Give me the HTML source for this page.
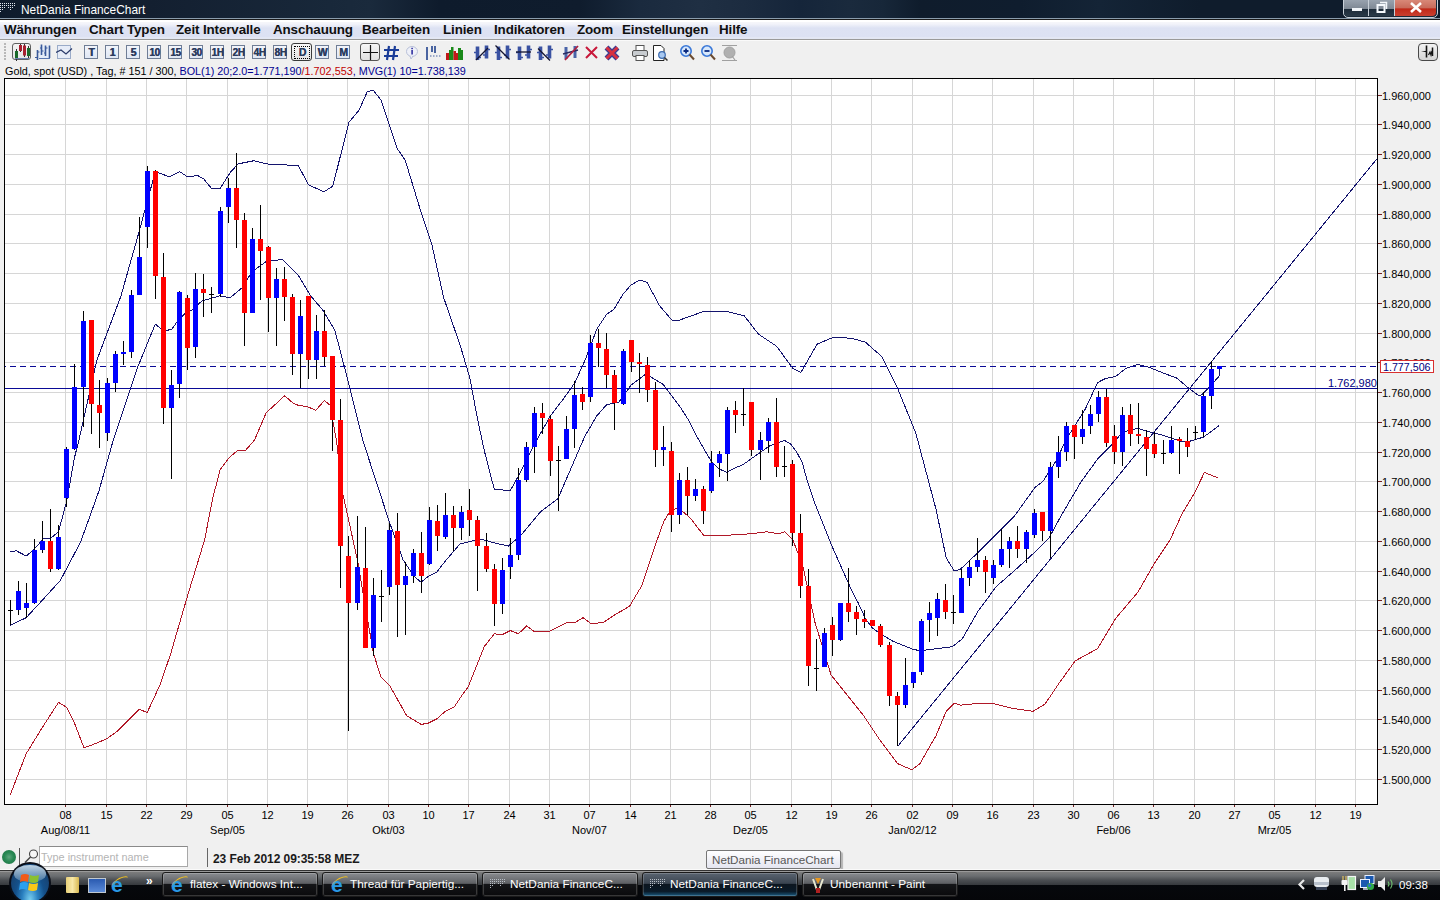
<!DOCTYPE html>
<html><head><meta charset="utf-8">
<style>
html,body{margin:0;padding:0;}
body{width:1440px;height:900px;overflow:hidden;position:relative;background:#f0f0f0;font-family:'Liberation Sans', sans-serif;}
div{position:absolute;white-space:nowrap;}
.xl{width:41px;text-align:center;font-size:11px;line-height:13px;color:#000;}
.yl{left:1382px;font-size:11px;line-height:13px;color:#000;}
#title{left:0;top:0;width:1440px;height:18px;background:linear-gradient(90deg,#0f1e30 0%,#1a2d45 40%,#10223a 70%,#0d1a2c 100%);}
#menu{left:0;top:18px;width:1440px;height:23px;background:linear-gradient(#8a9cac 0,#8a9cac 1px,#1a1a1a 1px,#1a1a1a 2px,#fff 2px,#fff 4px,#f6f6fa 4px,#f2f3fa 6px,#dde2f3 10px,#dce1f3 19px,#e3e7f4 19px,#e3e7f4 21px,#9a9a9a 21px,#9a9a9a 22px,#fafafa 22px);}
.mi{top:22px;font-size:13.4px;font-weight:bold;color:#101010;line-height:16px;letter-spacing:-0.12px;}
#info{left:5px;top:64px;font-size:10.8px;line-height:14px;color:#000;}
</style></head><body>
<div style="left:0;top:0;width:1440px;height:18px;background:linear-gradient(90deg,#0f1c2c 0px,#131f30 150px,#18283a 330px,#1a2a3c 370px,#0e1b2c 440px,#0f1c2d 580px,#1a2a3e 640px,#1f2f43 700px,#1c2c40 744px,#15253a 800px,#1a2a3d 850px,#172739 883px,#0f1c2c 920px,#0f1d2e 1020px,#142436 1100px,#0f1c2c 1200px,#0f1c2c 1440px)"></div>
<svg style="position:absolute;left:0;top:0" width="16" height="14" shape-rendering="crispEdges"><g fill="#dfe6ee"><rect x="0" y="3" width="1" height="1"/><rect x="2" y="3" width="1" height="1"/><rect x="4" y="3" width="1" height="1"/><rect x="6" y="3" width="1" height="1"/><rect x="8" y="3" width="1" height="1"/><rect x="10" y="3" width="1" height="1"/><rect x="12" y="3" width="1" height="1"/><rect x="14" y="3" width="1" height="1"/><rect x="0" y="5" width="1" height="1"/><rect x="2" y="5" width="1" height="1"/><rect x="4" y="5" width="1" height="1"/><rect x="6" y="5" width="1" height="1"/><rect x="8" y="5" width="1" height="1"/><rect x="10" y="5" width="1" height="1"/><rect x="12" y="5" width="1" height="1"/><rect x="14" y="5" width="1" height="1"/><rect x="0" y="7" width="1" height="1"/><rect x="2" y="7" width="1" height="1"/><rect x="4" y="7" width="1" height="1"/><rect x="8" y="7" width="1" height="1"/><rect x="10" y="7" width="1" height="1"/><rect x="12" y="7" width="1" height="1"/><rect x="0" y="9" width="1" height="1"/><rect x="2" y="9" width="1" height="1"/><rect x="10" y="9" width="1" height="1"/><rect x="0" y="11" width="1" height="1"/></g></svg>
<div style="left:21px;top:2px;font:11.9px/17px 'Liberation Sans', sans-serif;color:#fff">NetDania FinanceChart</div>
<div style="left:1343px;top:-3px;width:93px;height:19px;border:1px solid #c8d0d8;border-radius:0 0 5px 5px;background:#1a2a3a;overflow:hidden"></div>
<div style="left:1344px;top:0px;width:24px;height:16px;background:linear-gradient(#98a2ae 0,#7e8894 55%,#1c2a38 55%,#2a3a48 100%);border-radius:0 0 0 4px"></div>
<div style="left:1369px;top:0px;width:25px;height:16px;background:linear-gradient(#98a2ae 0,#7e8894 55%,#1c2a38 55%,#2a3a48 100%)"></div>
<div style="left:1395px;top:0px;width:41px;height:16px;background:linear-gradient(#d88878 0,#c86a5a 50%,#c02818 55%,#c84030 100%);border-radius:0 0 4px 0"></div>
<div style="left:1368px;top:0;width:1px;height:16px;background:#c8d0d8"></div>
<div style="left:1394px;top:0;width:1px;height:16px;background:#c8d0d8"></div>
<div style="left:1352px;top:8px;width:10px;height:3px;background:#f0f4f8"></div>
<svg style="position:absolute;left:1376px;top:1px" width="12" height="12">
<path d="M4 1.5H10.5V8" stroke="#f0f4f8" stroke-width="1.5" fill="none"/><rect x="1.5" y="4" width="7" height="7" fill="none" stroke="#f4f8fc" stroke-width="2"/></svg>
<svg style="position:absolute;left:1409px;top:2px" width="14" height="11">
<path d="M2 1L12 10M12 1L2 10" stroke="#fff" stroke-width="2.6"/></svg>
<div id="menu"></div>
<div class="mi" style="left:4px">Währungen</div>
<div class="mi" style="left:89px">Chart Typen</div>
<div class="mi" style="left:176px">Zeit Intervalle</div>
<div class="mi" style="left:273px">Anschauung</div>
<div class="mi" style="left:362px">Bearbeiten</div>
<div class="mi" style="left:443px">Linien</div>
<div class="mi" style="left:494px">Indikatoren</div>
<div class="mi" style="left:577px">Zoom</div>
<div class="mi" style="left:622px">Einstellungen</div>
<div class="mi" style="left:719px">Hilfe</div>
<div id="info">Gold, spot (USD) , Tag, # 151 / 300, <span style="color:#000090">BOL(1) 20;2.0=1.771,190</span><span style="color:#c00000">/1.702,553</span><span style="color:#000090">, MVG(1) 10=1.738,139</span></div>
<div style="left:4px;top:43px;width:2px;height:2px;background:#b8b8b8"></div>
<div style="left:4px;top:46px;width:2px;height:2px;background:#b8b8b8"></div>
<div style="left:4px;top:49px;width:2px;height:2px;background:#b8b8b8"></div>
<div style="left:4px;top:52px;width:2px;height:2px;background:#b8b8b8"></div>
<div style="left:4px;top:55px;width:2px;height:2px;background:#b8b8b8"></div>
<div style="left:4px;top:58px;width:2px;height:2px;background:#b8b8b8"></div>
<div style="left:12px;top:43px;width:17px;height:15px;border:1.5px solid #606060;border-radius:3px;background:linear-gradient(#f4f4f4,#e6e6e6)"></div>
<svg style="position:absolute;left:12px;top:43px" width="22" height="20">
<path d="M4.5 6V18M8.5 1V9M12.5 1V14M16.5 3V16" stroke="#333" stroke-width="1"/>
<rect x="3" y="8" width="3" height="8" fill="#1a6a2a"/><rect x="7" y="2" width="3" height="6" fill="#a82030"/>
<rect x="11" y="2.5" width="3" height="10" fill="#a82030"/><rect x="15" y="5" width="3" height="8" fill="#1a6a2a"/>
<path d="M3 15.5H17" stroke="#6a80b0" stroke-width="1"/></svg>
<svg style="position:absolute;left:35px;top:44px" width="17" height="17">
<rect x="4" y="1.5" width="11" height="13" fill="#e4ecf8"/>
<path d="M4 14.5H15M14.5 2V15" stroke="#5a78b0" stroke-width="1"/>
<path d="M2.5 6V16M6.5 0.5V11M10.5 1.5V12M14.5 1.5V14" stroke="#3a5a9a" stroke-width="1.6"/>
<path d="M0 13.5H2.5M2.5 8H4.5M5 4H6.5M6.5 7H8.5M9 9H10.5M10.5 4H12.5" stroke="#3a5a9a" stroke-width="1.2"/></svg>
<svg style="position:absolute;left:56px;top:44px" width="17" height="16">
<rect x="1.5" y="1.5" width="13" height="13" fill="#e6ecf8" stroke="#9aabc8" stroke-width="1"/>
<path d="M0 8.5L5 6L10 10L16 4.5" stroke="#2a3a6a" stroke-width="1.2" fill="none"/></svg>
<div style="left:84px;top:45px;width:12px;height:12px;border:1px solid #6f7d95;background:linear-gradient(#f2f5fb,#dfe7f4)"></div><div style="left:84px;top:46px;width:15px;height:13px;font:bold 10.5px/13px 'Liberation Sans', sans-serif;color:#2c3c5e;text-align:center;letter-spacing:0;text-shadow:0.35px 0 0 #2c3c5e">T</div>
<div style="left:105px;top:45px;width:12px;height:12px;border:1px solid #6f7d95;background:linear-gradient(#f2f5fb,#dfe7f4)"></div><div style="left:105px;top:46px;width:15px;height:13px;font:bold 10.5px/13px 'Liberation Sans', sans-serif;color:#2c3c5e;text-align:center;letter-spacing:0;text-shadow:0.35px 0 0 #2c3c5e">1</div>
<div style="left:126px;top:45px;width:12px;height:12px;border:1px solid #6f7d95;background:linear-gradient(#f2f5fb,#dfe7f4)"></div><div style="left:126px;top:46px;width:15px;height:13px;font:bold 10.5px/13px 'Liberation Sans', sans-serif;color:#2c3c5e;text-align:center;letter-spacing:0;text-shadow:0.35px 0 0 #2c3c5e">5</div>
<div style="left:147px;top:45px;width:12px;height:12px;border:1px solid #6f7d95;background:linear-gradient(#f2f5fb,#dfe7f4)"></div><div style="left:147px;top:46px;width:15px;height:13px;font:bold 10px/13px 'Liberation Sans', sans-serif;color:#2c3c5e;text-align:center;letter-spacing:-0.4px;text-shadow:0.35px 0 0 #2c3c5e">10</div>
<div style="left:168px;top:45px;width:12px;height:12px;border:1px solid #6f7d95;background:linear-gradient(#f2f5fb,#dfe7f4)"></div><div style="left:168px;top:46px;width:15px;height:13px;font:bold 10px/13px 'Liberation Sans', sans-serif;color:#2c3c5e;text-align:center;letter-spacing:-0.4px;text-shadow:0.35px 0 0 #2c3c5e">15</div>
<div style="left:189px;top:45px;width:12px;height:12px;border:1px solid #6f7d95;background:linear-gradient(#f2f5fb,#dfe7f4)"></div><div style="left:189px;top:46px;width:15px;height:13px;font:bold 10px/13px 'Liberation Sans', sans-serif;color:#2c3c5e;text-align:center;letter-spacing:-0.4px;text-shadow:0.35px 0 0 #2c3c5e">30</div>
<div style="left:210px;top:45px;width:12px;height:12px;border:1px solid #6f7d95;background:linear-gradient(#f2f5fb,#dfe7f4)"></div><div style="left:210px;top:46px;width:15px;height:13px;font:bold 10px/13px 'Liberation Sans', sans-serif;color:#2c3c5e;text-align:center;letter-spacing:-0.4px;text-shadow:0.35px 0 0 #2c3c5e">1H</div>
<div style="left:231px;top:45px;width:12px;height:12px;border:1px solid #6f7d95;background:linear-gradient(#f2f5fb,#dfe7f4)"></div><div style="left:231px;top:46px;width:15px;height:13px;font:bold 10px/13px 'Liberation Sans', sans-serif;color:#2c3c5e;text-align:center;letter-spacing:-0.4px;text-shadow:0.35px 0 0 #2c3c5e">2H</div>
<div style="left:252px;top:45px;width:12px;height:12px;border:1px solid #6f7d95;background:linear-gradient(#f2f5fb,#dfe7f4)"></div><div style="left:252px;top:46px;width:15px;height:13px;font:bold 10px/13px 'Liberation Sans', sans-serif;color:#2c3c5e;text-align:center;letter-spacing:-0.4px;text-shadow:0.35px 0 0 #2c3c5e">4H</div>
<div style="left:273px;top:45px;width:12px;height:12px;border:1px solid #6f7d95;background:linear-gradient(#f2f5fb,#dfe7f4)"></div><div style="left:273px;top:46px;width:15px;height:13px;font:bold 10px/13px 'Liberation Sans', sans-serif;color:#2c3c5e;text-align:center;letter-spacing:-0.4px;text-shadow:0.35px 0 0 #2c3c5e">8H</div>
<div style="left:291px;top:43px;width:19px;height:16px;border:1.5px solid #3a3a3a;border-radius:3px;background:linear-gradient(#f8f8f8,#e4e4e4)"></div><div style="left:294px;top:46px;width:14px;height:11px;border:1px dotted #000;"></div><div style="left:295px;top:46px;width:15px;height:13px;font:bold 10.5px/13px 'Liberation Sans', sans-serif;color:#2c3c5e;text-align:center;letter-spacing:0;text-shadow:0.35px 0 0 #2c3c5e">D</div>
<div style="left:315px;top:45px;width:12px;height:12px;border:1px solid #6f7d95;background:linear-gradient(#f2f5fb,#dfe7f4)"></div><div style="left:315px;top:46px;width:15px;height:13px;font:bold 10.5px/13px 'Liberation Sans', sans-serif;color:#2c3c5e;text-align:center;letter-spacing:0;text-shadow:0.35px 0 0 #2c3c5e">W</div>
<div style="left:336px;top:45px;width:12px;height:12px;border:1px solid #6f7d95;background:linear-gradient(#f2f5fb,#dfe7f4)"></div><div style="left:336px;top:46px;width:15px;height:13px;font:bold 10.5px/13px 'Liberation Sans', sans-serif;color:#2c3c5e;text-align:center;letter-spacing:0;text-shadow:0.35px 0 0 #2c3c5e">M</div>
<div style="left:360px;top:43px;width:18px;height:16px;border:1.5px solid #555;border-radius:3px;background:linear-gradient(#f6f6f6,#e0e0e0)"></div>
<svg style="position:absolute;left:360px;top:43px" width="22" height="20">
<path d="M3 9.5H18M10.5 2V17" stroke="#111" stroke-width="1.2"/></svg>
<svg style="position:absolute;left:383px;top:44px" width="18" height="18">
<path d="M6 2L4 16M12 2L10 16M1 6H16M1 12H15" stroke="#1a3c98" stroke-width="2.2"/></svg>
<svg style="position:absolute;left:405px;top:45px" width="15" height="16">
<ellipse cx="7" cy="6.5" rx="5.5" ry="5" fill="#eef0f8" stroke="#b8c0d8" stroke-width="1"/><path d="M5 11L6 14L8 11" fill="#eef0f8" stroke="#b8c0d8"/>
<rect x="6.3" y="5" width="1.6" height="4.5" fill="#3030a0"/><rect x="6.3" y="2.8" width="1.6" height="1.4" fill="#3030a0"/></svg>
<svg style="position:absolute;left:424px;top:44px" width="18" height="18">
<path d="M3 3V16M8 2V8M11 2V9" stroke="#4a64a0" stroke-width="2"/><path d="M7 5H13M6 12H17" stroke="#4a64a0" stroke-width="1.2" stroke-dasharray="1.5 1.5"/></svg>
<svg style="position:absolute;left:445px;top:44px" width="19" height="18">
<rect x="1" y="9" width="3" height="7" fill="#c01818"/><rect x="4" y="6" width="2" height="10" fill="#1a8a1a"/><rect x="6" y="3" width="2.5" height="13" fill="#1a8a1a"/>
<rect x="8.5" y="7" width="2.5" height="9" fill="#c01818"/><rect x="11" y="9" width="2" height="7" fill="#c01818"/><rect x="13" y="4" width="3" height="12" fill="#1a8a1a"/><rect x="16" y="6" width="2" height="10" fill="#1a8a1a"/></svg>
<svg style="position:absolute;left:473px;top:44px" width="18" height="18">
<path d="M4.5 2.5V16M13.5 1.5V14.5" stroke="#3a52a2" stroke-width="3.6"/><path d="M1 8.5H3M6 13.5H8M15 5.5H17M10 11H12" stroke="#3a52a2" stroke-width="1.6"/><path d="M3 16L15 4" stroke="#141430" stroke-width="1.3"/></svg>
<svg style="position:absolute;left:494px;top:44px" width="18" height="18">
<path d="M4.5 2.5V16M13.5 1.5V14.5" stroke="#3a52a2" stroke-width="3.6"/><path d="M1 8.5H3M6 13.5H8M15 5.5H17M10 11H12" stroke="#3a52a2" stroke-width="1.6"/><path d="M1.5 1.5L15.5 15.5" stroke="#141430" stroke-width="1.3"/></svg>
<svg style="position:absolute;left:515px;top:44px" width="18" height="18">
<path d="M4.5 2.5V16M13.5 1.5V14.5" stroke="#3a52a2" stroke-width="3.6"/><path d="M1 8.5H3M6 13.5H8M15 5.5H17M10 11H12" stroke="#3a52a2" stroke-width="1.6"/><path d="M1 8H16" stroke="#141430" stroke-width="1.3"/></svg>
<svg style="position:absolute;left:536px;top:44px" width="18" height="18">
<path d="M4.5 2.5V16M13.5 1.5V14.5" stroke="#3a52a2" stroke-width="3.6"/><path d="M1 8.5H3M6 13.5H8M15 5.5H17M10 11H12" stroke="#3a52a2" stroke-width="1.6"/><path d="M2 4.5L14 16.5" stroke="#141430" stroke-width="1.3"/></svg>
<svg style="position:absolute;left:562px;top:44px" width="19" height="18">
<path d="M4 3V15M13 2V14" stroke="#4a64a8" stroke-width="3"/><path d="M1 10L16 6" stroke="#2a2a60" stroke-width="1.4"/><path d="M3 16L16 2" stroke="#b02040" stroke-width="1.8"/></svg>
<svg style="position:absolute;left:583px;top:44px" width="18" height="18">
<path d="M3 3L14 14M14 3L3 14" stroke="#c8183a" stroke-width="2"/></svg>
<svg style="position:absolute;left:603px;top:44px" width="19" height="18">
<path d="M3.5 3.5L14.5 14.5M14.5 3.5L3.5 14.5" stroke="#3a3a90" stroke-width="5.5"/><path d="M3.5 3.5L14.5 14.5M14.5 3.5L3.5 14.5" stroke="#d83040" stroke-width="3"/></svg>
<svg style="position:absolute;left:631px;top:44px" width="19" height="18">
<rect x="5" y="1.5" width="8" height="5" fill="#fff" stroke="#555"/><rect x="1.5" y="6.5" width="15" height="6" rx="1.5" fill="#c8ccd0" stroke="#555"/>
<rect x="5" y="11.5" width="8" height="5" fill="#fff" stroke="#555"/></svg>
<svg style="position:absolute;left:652px;top:44px" width="18" height="18">
<path d="M1.5 1.5H9L12 4.5V16.5H1.5Z" fill="#fff" stroke="#222"/><circle cx="10" cy="11" r="3.3" fill="#a8c8f0" stroke="#3a6ab0" stroke-width="1.2"/><path d="M12.5 13.5L15.5 16.5" stroke="#333" stroke-width="1.5"/></svg>
<svg style="position:absolute;left:679px;top:44px" width="18" height="18">
<circle cx="7" cy="7" r="5.2" fill="#d8e8fb" stroke="#3a78d8" stroke-width="1.6"/><path d="M4.5 7H9.5M7 4.5V9.5" stroke="#0a2a80" stroke-width="1.8"/><path d="M10.5 10.5L15 15.5" stroke="#6a4a30" stroke-width="2"/></svg>
<svg style="position:absolute;left:700px;top:44px" width="18" height="18">
<circle cx="7" cy="7" r="5.2" fill="#d8e8fb" stroke="#3a78d8" stroke-width="1.6"/><path d="M4.5 7H9.5" stroke="#0a2a80" stroke-width="1.8"/><path d="M10.5 10.5L15 15.5" stroke="#6a4a30" stroke-width="2"/></svg>
<svg style="position:absolute;left:721px;top:44px" width="18" height="18">
<circle cx="8.5" cy="8.5" r="5.5" fill="#b0b0b0" stroke="#a0a0a0"/><path d="M1 1.5H16M1 16.5H16M11 12L14 16" stroke="#a0a0a0" stroke-width="1.2"/></svg>
<div style="left:1418px;top:43px;width:18px;height:16px;border:1.5px solid #484848;border-radius:4px;background:linear-gradient(#f2f2f2,#d4d4d4)"></div>
<svg style="position:absolute;left:1418px;top:43px" width="21" height="19">
<path d="M3 8.5L9 7.8V9.2Z" fill="#111"/><path d="M8.5 2.5V14.5" stroke="#111" stroke-width="1.6"/><path d="M10.5 12L12 9L13 12L14 8" stroke="#111" stroke-width="1.2" fill="none"/><path d="M14.5 4.5V13" stroke="#111" stroke-width="1.5"/></svg>
<svg width="1440" height="900" style="position:absolute;left:0;top:0">
<rect x="5" y="79" width="1372" height="725" fill="#ffffff"/>
<path d="M65.5 79V804 M106.5 79V804 M146.5 79V804 M186.5 79V804 M227.5 79V804 M267.5 79V804 M307.5 79V804 M347.5 79V804 M388.5 79V804 M428.5 79V804 M468.5 79V804 M509.5 79V804 M549.5 79V804 M589.5 79V804 M630.5 79V804 M670.5 79V804 M710.5 79V804 M750.5 79V804 M791.5 79V804 M831.5 79V804 M871.5 79V804 M912.5 79V804 M952.5 79V804 M992.5 79V804 M1033.5 79V804 M1073.5 79V804 M1113.5 79V804 M1153.5 79V804 M1194.5 79V804 M1234.5 79V804 M1274.5 79V804 M1315.5 79V804 M1355.5 79V804 M5 95.5H1377 M5 124.5H1377 M5 154.5H1377 M5 184.5H1377 M5 214.5H1377 M5 243.5H1377 M5 273.5H1377 M5 303.5H1377 M5 333.5H1377 M5 362.5H1377 M5 392.5H1377 M5 422.5H1377 M5 452.5H1377 M5 481.5H1377 M5 511.5H1377 M5 541.5H1377 M5 571.5H1377 M5 600.5H1377 M5 630.5H1377 M5 660.5H1377 M5 690.5H1377 M5 719.5H1377 M5 749.5H1377 M5 779.5H1377" stroke="#d6d6d6" stroke-width="1" fill="none" shape-rendering="crispEdges"/>
<path d="M65.5 805V807 M106.5 805V807 M146.5 805V807 M186.5 805V807 M227.5 805V807 M267.5 805V807 M307.5 805V807 M347.5 805V807 M388.5 805V807 M428.5 805V807 M468.5 805V807 M509.5 805V807 M549.5 805V807 M589.5 805V807 M630.5 805V807 M670.5 805V807 M710.5 805V807 M750.5 805V807 M791.5 805V807 M831.5 805V807 M871.5 805V807 M912.5 805V807 M952.5 805V807 M992.5 805V807 M1033.5 805V807 M1073.5 805V807 M1113.5 805V807 M1153.5 805V807 M1194.5 805V807 M1234.5 805V807 M1274.5 805V807 M1315.5 805V807 M1355.5 805V807 M1378 95.5H1382 M1378 124.5H1382 M1378 154.5H1382 M1378 184.5H1382 M1378 214.5H1382 M1378 243.5H1382 M1378 273.5H1382 M1378 303.5H1382 M1378 333.5H1382 M1378 362.5H1382 M1378 392.5H1382 M1378 422.5H1382 M1378 452.5H1382 M1378 481.5H1382 M1378 511.5H1382 M1378 541.5H1382 M1378 571.5H1382 M1378 600.5H1382 M1378 630.5H1382 M1378 660.5H1382 M1378 690.5H1382 M1378 719.5H1382 M1378 749.5H1382 M1378 779.5H1382" stroke="#702020" stroke-width="1" fill="none" shape-rendering="crispEdges"/>
<path d="M10.1 552.0 L16.1 550.7 L26.2 556.0 L34.3 549.1 L43.6 538.6 L50.4 538.6 L58.5 531.8 L66.6 501.5 L74.6 457.1 L78.7 441.0 L96.8 360.4 L121.0 295.8 L139.2 231.3 L155.3 171.6 L169.4 176.8 L179.5 171.6 L187.6 176.8 L197.7 175.6 L203.7 178.8 L211.8 188.9 L219.8 188.9 L230.0 172.8 L238.0 163.9 L254.1 160.7 L266.2 163.9 L282.4 164.7 L298.5 165.9 L308.6 184.9 L323.9 191.8 L332.8 186.1 L348.9 122.4 L359.0 110.3 L367.1 92.1 L373.1 90.1 L381.2 100.2 L397.3 148.6 L405.4 160.7 L419.5 207.1 L431.6 243.4 L443.7 297.8 L460.0 344.8 L469.8 377.8 L477.1 416.9 L484.4 451.1 L494.2 489.0 L510.1 490.8 L518.7 475.6 L533.3 446.3 L550.5 415.7 L562.7 399.8 L574.9 382.7 L585.9 358.2 L596.9 328.9 L606.7 314.2 L614.0 309.3 L622.6 294.7 L631.1 284.9 L639.7 280.0 L647.0 282.4 L659.7 305.9 L671.8 320.0 L679.8 320.0 L702.0 312.0 L726.2 311.2 L744.4 316.0 L758.5 334.2 L776.7 346.3 L792.8 368.4 L800.9 372.5 L817.0 344.2 L833.1 337.4 L851.3 338.2 L865.4 342.2 L881.5 356.3 L897.7 388.6 L915.8 433.0 L920.0 449.0 L936.1 509.6 L946.2 558.0 L954.3 570.9 L960.3 569.3 L976.5 554.0 L992.6 537.8 L1014.8 515.6 L1035.0 487.4 L1043.0 481.3 L1057.2 459.2 L1065.2 441.0 L1085.4 408.8 L1097.5 382.6 L1105.6 378.5 L1115.6 376.5 L1125.7 368.4 L1137.8 364.4 L1149.9 367.6 L1162.0 372.5 L1176.7 378.1 L1189.1 388.5 L1199.2 396.0 L1203.1 393.7 L1214.0 382.0 L1219.4 375.8 L1219.4 368.0" stroke="#14146e" stroke-width="1" fill="none" shape-rendering="crispEdges"/>
<path d="M10.1 625.3 L26.2 617.7 L40.3 602.4 L60.5 580.2 L80.7 541.8 L98.8 491.4 L113.0 441.0 L137.2 368.4 L155.3 324.0 L163.0 330.6 L171.4 329.7 L177.0 322.0 L184.7 313.6 L192.2 309.8 L201.7 301.1 L219.8 295.8 L230.0 297.8 L242.0 287.8 L252.1 271.6 L266.2 261.5 L282.4 259.5 L298.5 275.7 L310.6 295.8 L322.7 310.0 L334.8 330.1 L346.9 376.5 L363.0 441.0 L389.3 521.7 L403.1 560.0 L414.4 576.7 L421.1 582.2 L427.8 576.7 L436.7 572.2 L444.4 562.2 L460.0 543.9 L480.2 539.0 L498.3 543.9 L508.4 546.0 L520.5 535.8 L540.7 511.6 L557.8 498.8 L570.0 470.7 L584.7 436.5 L596.9 415.7 L606.7 404.7 L618.9 402.2 L631.1 385.1 L645.8 374.1 L663.3 384.4 L671.6 395.6 L680.0 406.7 L687.8 418.9 L695.6 434.4 L703.3 447.8 L711.1 461.1 L718.9 468.9 L726.7 472.2 L735.6 467.8 L743.3 464.4 L751.1 458.9 L770.0 445.6 L784.4 440.4 L791.1 444.4 L796.7 452.2 L802.2 462.2 L806.7 478.9 L814.4 502.2 L823.3 524.4 L832.2 546.7 L841.1 566.7 L850.0 586.7 L858.9 604.4 L865.6 618.9 L872.6 628.2 L882.0 634.8 L893.3 641.4 L912.2 649.0 L919.9 650.8 L952.3 646.7 L962.4 638.7 L978.5 610.4 L996.6 586.2 L1012.8 572.1 L1035.0 552.0 L1049.1 537.8 L1061.2 515.6 L1081.4 481.3 L1097.5 459.2 L1111.6 445.0 L1121.7 433.0 L1130.0 429.9 L1137.8 428.4 L1146.3 431.0 L1154.4 433.0 L1162.7 435.2 L1171.2 438.0 L1179.8 441.1 L1187.6 441.9 L1195.3 439.6 L1203.1 437.2 L1210.9 431.8 L1219.4 425.4" stroke="#14146e" stroke-width="1" fill="none" shape-rendering="crispEdges"/>
<path d="M10.1 795.2 L26.2 753.6 L42.4 727.4 L58.5 702.4 L66.6 707.2 L74.6 723.4 L83.9 747.6 L90.8 745.5 L106.9 738.7 L117.0 731.4 L139.2 709.3 L147.2 712.5 L159.6 685.8 L170.4 654.7 L187.6 595.6 L204.7 539.6 L212.5 499.1 L220.2 469.6 L229.6 457.1 L237.3 450.9 L245.1 450.9 L254.5 440.0 L266.2 412.8 L284.7 395.7 L293.2 403.3 L298.0 405.2 L308.3 407.0 L315.9 410.3 L324.4 400.4 L330.0 405.2 L336.7 442.0 L341.7 488.7 L357.6 560.9 L373.4 653.3 L380.7 676.4 L389.3 685.1 L406.7 715.6 L421.1 724.4 L427.8 723.3 L436.7 718.9 L445.6 711.1 L454.4 706.7 L463.3 693.3 L468.1 687.1 L484.2 646.7 L494.3 633.8 L502.4 634.6 L510.4 630.6 L518.5 633.8 L526.6 625.8 L534.6 631.8 L548.7 631.8 L566.9 622.5 L575.0 622.5 L583.0 617.7 L591.1 623.7 L603.2 622.5 L615.3 614.5 L629.4 606.4 L641.5 586.2 L653.6 549.9 L663.7 521.7 L669.8 511.6 L677.8 507.6 L689.9 517.6 L704.0 535.8 L718.2 535.8 L750.4 533.8 L766.6 531.8 L778.7 533.8 L784.7 531.8 L792.8 539.8 L802.9 566.1 L815.0 622.5 L831.1 675.0 L863.4 715.3 L879.5 739.5 L897.7 763.7 L911.8 769.8 L919.9 763.7 L936.1 735.5 L946.2 711.3 L954.3 703.2 L960.3 705.2 L980.5 703.2 L994.6 704.0 L1012.8 708.4 L1032.9 711.3 L1045.1 704.0 L1059.2 683.0 L1075.3 660.8 L1097.5 648.7 L1115.6 618.5 L1137.8 592.3 L1154.0 564.0 L1170.1 539.8 L1182.2 513.6 L1194.3 493.4 L1204.4 472.5 L1218.5 478.1" stroke="#b01828" stroke-width="1" fill="none" shape-rendering="crispEdges"/>
<path d="M5 388.5H1377" stroke="#0a0a96" stroke-width="1" shape-rendering="crispEdges"/>
<path d="M5 366.5H1377" stroke="#0a0a96" stroke-width="1" stroke-dasharray="6 4" stroke-dashoffset="5" shape-rendering="crispEdges"/>
<path d="M897.9 746.1 L1377 158.7" stroke="#14146e" stroke-width="1" fill="none" shape-rendering="crispEdges"/>
<path d="M10.5 600V625 M18.5 581V615 M26.5 583V618 M34.5 539V604 M42.5 521V553 M50.5 509V572 M58.5 525V570 M66.5 447V507 M74.5 364V450 M83.5 311V427 M91.5 320V434 M99.5 380V448 M107.5 378V441 M115.5 351V392 M123.5 341V365 M131.5 290V358 M139.5 217V295 M147.5 166V248 M155.5 170V299 M163.5 253V424 M171.5 370V479 M179.5 291V398 M187.5 295V370 M195.5 273V358 M203.5 274V317 M211.5 287V313 M220.5 207V297 M228.5 178V223 M236.5 153V248 M244.5 213V346 M252.5 228V313 M260.5 205V300 M268.5 246V332 M276.5 268V346 M284.5 267V321 M292.5 294V375 M300.5 300V388 M308.5 296V379 M316.5 315V379 M324.5 310V366 M332.5 356V451 M340.5 399V588 M348.5 536V731 M357.5 516V610 M365.5 527V648 M373.5 578V656 M381.5 570V622 M389.5 523V595 M397.5 513V637 M405.5 562V635 M413.5 549V583 M421.5 532V593 M429.5 507V565 M437.5 505V551 M445.5 493V539 M453.5 506V551 M461.5 506V540 M469.5 489V536 M477.5 516V591 M486.5 533V572 M494.5 564V626 M502.5 558V614 M510.5 538V579 M518.5 468V560 M526.5 442V482 M534.5 407V473 M542.5 403V434 M550.5 415V476 M558.5 446V511 M566.5 416V459 M574.5 381V448 M582.5 387V410 M590.5 335V402 M598.5 329V367 M606.5 333V388 M614.5 370V430 M623.5 349V405 M631.5 340V372 M639.5 353V393 M647.5 357V402 M655.5 382V467 M663.5 426V466 M671.5 442V532 M679.5 473V524 M687.5 467V515 M695.5 479V501 M703.5 486V524 M711.5 451V493 M719.5 451V477 M727.5 407V481 M735.5 401V433 M743.5 388V426 M751.5 402V456 M760.5 432V480 M768.5 418V453 M776.5 398V477 M784.5 446V477 M792.5 460V546 M800.5 514V598 M808.5 569V686 M816.5 639V691 M824.5 628V667 M832.5 617V656 M840.5 603V641 M848.5 568V622 M856.5 606V635 M864.5 610V628 M872.5 620V626 M880.5 624V647 M889.5 642V706 M897.5 692V746 M905.5 658V708 M913.5 672V688 M921.5 619V675 M929.5 602V642 M937.5 593V636 M945.5 584V619 M953.5 595V624 M961.5 569V613 M969.5 560V586 M977.5 538V572 M985.5 556V593 M993.5 560V584 M1001.5 529V567 M1009.5 537V568 M1017.5 526V558 M1026.5 530V563 M1034.5 509V538 M1042.5 512V541 M1050.5 462V558 M1058.5 436V478 M1066.5 422V461 M1074.5 425V459 M1082.5 410V444 M1090.5 405V434 M1098.5 391V422 M1106.5 389V447 M1114.5 425V464 M1122.5 407V466 M1130.5 404V446 M1138.5 403V444 M1146.5 430V476 M1154.5 432V458 M1163.5 440V464 M1171.5 426V454 M1179.5 437V474 M1187.5 428V457 M1195.5 426V440 M1203.5 392V437 M1211.5 361V409 M1219.5 366V369" stroke="#000" stroke-width="1" fill="none" shape-rendering="crispEdges"/>
<path d="M8 610.5H13 M209 294.5H214 M379 596.5H384 M556 460.5H561 M741 414.5H746 M782 466.5H787 M814 668.5H819 M951 612.5H956 M1161 453.5H1166 M1193 432.5H1198" stroke="#000" stroke-width="1" fill="none" shape-rendering="crispEdges"/>
<path d="M16 591h5v19h-5z M24 603h5v5h-5z M32 550h5v53h-5z M40 541h5v9h-5z M56 537h5v32h-5z M64 449h5v49h-5z M72 387h5v62h-5z M81 321h5v66h-5z M105 383h5v50h-5z M113 354h5v29h-5z M121 352h5v2h-5z M129 295h5v57h-5z M137 257h5v38h-5z M145 171h5v56h-5z M169 385h5v23h-5z M177 292h5v92h-5z M193 289h5v58h-5z M218 211h5v83h-5z M226 188h5v19h-5z M250 239h5v74h-5z M274 279h5v19h-5z M298 316h5v38h-5z M314 331h5v29h-5z M355 567h5v36h-5z M371 595h5v53h-5z M387 530h5v57h-5z M403 576h5v9h-5z M411 553h5v23h-5z M427 520h5v44h-5z M443 515h5v22h-5z M459 512h5v16h-5z M500 570h5v34h-5z M508 555h5v12h-5z M516 480h5v75h-5z M524 447h5v33h-5z M532 413h5v34h-5z M564 429h5v30h-5z M572 395h5v34h-5z M588 343h5v54h-5z M621 351h5v53h-5z M661 447h5v3h-5z M677 480h5v35h-5z M693 489h5v7h-5z M709 463h5v28h-5z M717 454h5v9h-5z M725 410h5v44h-5z M758 440h5v10h-5z M766 422h5v19h-5z M822 633h5v34h-5z M838 603h5v37h-5z M903 685h5v20h-5z M911 672h5v11h-5z M919 621h5v51h-5z M927 613h5v7h-5z M935 599h5v19h-5z M959 578h5v35h-5z M967 567h5v11h-5z M975 560h5v7h-5z M991 565h5v13h-5z M999 549h5v16h-5z M1007 541h5v8h-5z M1024 532h5v17h-5z M1032 513h5v22h-5z M1048 467h5v64h-5z M1056 452h5v15h-5z M1064 426h5v26h-5z M1080 429h5v8h-5z M1088 414h5v12h-5z M1096 397h5v17h-5z M1120 415h5v37h-5z M1169 440h5v13h-5z M1201 396h5v36h-5z M1209 369h5v27h-5z M1217 366h5v3h-5z" fill="#0000ff" shape-rendering="crispEdges"/>
<path d="M48 541h5v28h-5z M89 320h5v84h-5z M97 405h5v8h-5z M153 171h5v105h-5z M161 277h5v131h-5z M185 298h5v50h-5z M201 289h5v4h-5z M234 188h5v32h-5z M242 220h5v93h-5z M258 239h5v12h-5z M266 247h5v51h-5z M282 279h5v18h-5z M290 297h5v57h-5z M306 296h5v64h-5z M322 331h5v26h-5z M330 356h5v64h-5z M338 420h5v126h-5z M346 556h5v47h-5z M363 568h5v80h-5z M395 531h5v54h-5z M419 553h5v23h-5z M435 521h5v15h-5z M451 515h5v13h-5z M467 510h5v10h-5z M475 520h5v26h-5z M484 546h5v23h-5z M492 569h5v35h-5z M540 413h5v5h-5z M548 419h5v42h-5z M580 394h5v8h-5z M596 343h5v5h-5z M604 349h5v26h-5z M612 375h5v28h-5z M629 340h5v22h-5z M637 362h5v2h-5z M645 365h5v25h-5z M653 390h5v60h-5z M669 451h5v64h-5z M685 480h5v16h-5z M701 489h5v22h-5z M733 410h5v5h-5z M749 402h5v48h-5z M774 422h5v45h-5z M790 464h5v69h-5z M798 533h5v53h-5z M806 586h5v80h-5z M830 625h5v15h-5z M846 603h5v9h-5z M854 612h5v7h-5z M862 619h5v3h-5z M870 620h5v6h-5z M878 626h5v19h-5z M887 645h5v51h-5z M895 696h5v9h-5z M943 600h5v12h-5z M983 560h5v12h-5z M1015 541h5v8h-5z M1040 512h5v19h-5z M1072 425h5v12h-5z M1104 397h5v46h-5z M1112 436h5v16h-5z M1128 415h5v19h-5z M1136 434h5v2h-5z M1144 437h5v12h-5z M1152 444h5v10h-5z M1177 439h5v2h-5z M1185 441h5v6h-5z" fill="#ff0000" shape-rendering="crispEdges"/>
<rect x="4.5" y="78.5" width="1373" height="726" fill="none" stroke="#000" stroke-width="1" shape-rendering="crispEdges" transform="translate(0,0)"/>
</svg>
<div style="left:1328px;top:376px;font:11px/14px 'Liberation Sans', sans-serif;color:#000080">1.762,980</div>
<div style="left:2px;top:850px;width:14px;height:14px;border-radius:50%;background:radial-gradient(circle at 50% 50%,#5fa67e 0,#2a8a55 45%,#1a7040 100%)"></div>
<div style="left:19px;top:848px;width:1px;height:19px;background:#555"></div>
<svg style="position:absolute;left:23px;top:848px" width="16" height="18">
<circle cx="10.5" cy="6" r="4" fill="#fff" fill-opacity="0.4" stroke="#444" stroke-width="1.1"/><path d="M7.5 9L2 14.5" stroke="#444" stroke-width="1.5"/></svg>
<div style="left:39px;top:846px;width:147px;height:19px;border:1px solid #a8a8a8;border-top-color:#8a8a8a;background:#fff"></div>
<div style="left:41px;top:850px;font:10.9px/15px 'Liberation Sans', sans-serif;color:#b4b4b4">Type instrument name</div>
<div style="left:207px;top:848px;width:1px;height:19px;background:#666"></div>
<div style="left:213px;top:852px;font:bold 12px/15px 'Liberation Sans', sans-serif;color:#1a1a1a;letter-spacing:-0.07px">23 Feb 2012 09:35:58 MEZ</div>
<div style="left:706px;top:850px;width:133px;height:17px;border:1px solid #767676;border-radius:2px;background:linear-gradient(#ffffff,#e4e5f0);box-shadow:2px 2px 1px rgba(0,0,0,0.25)"></div>
<div style="left:712px;top:852px;font:11.65px/15px 'Liberation Sans', sans-serif;color:#575757">NetDania FinanceChart</div>
<div style="left:0;top:869px;width:1440px;height:31px;background:linear-gradient(#fafafa 0,#fafafa 1px,#333 1px,#333 2px,#999 2px,#999 3px,#7c7c7c 3px,#6a6d70 7px,#4c4f53 11px,#36393d 16px,#06080c 16px,#050609 100%)"></div>
<div style="left:9px;top:862px;width:42px;height:42px;border-radius:50%;background:#0a0e18"></div>
<div style="left:11px;top:864px;width:38px;height:38px;border-radius:50%;background:radial-gradient(ellipse at 50% 95%,#7ad0f0 0,#2a80c0 30%,#14508a 55%,#1a3a60 100%)"></div>
<div style="left:14px;top:865px;width:32px;height:17px;border-radius:50% 50% 45% 45%;background:linear-gradient(rgba(220,235,245,0.85),rgba(140,180,210,0.35))"></div>
<svg style="position:absolute;left:18px;top:872px" width="24" height="22">
<path d="M3 3Q7 1 11 3L10 10Q6 8 2 10Z" fill="#f05a1a"/><path d="M12 3Q16 5 21 3L20 10Q16 12 11 10Z" fill="#8ac030"/>
<path d="M2 11Q6 9 10 11L9 18Q5 16 1 18Z" fill="#2aa0f0"/><path d="M11 11Q15 13 20 11L19 18Q15 20 10 18Z" fill="#fac818"/></svg>
<div style="left:66px;top:877px;width:13px;height:16px;background:linear-gradient(90deg,#e8d078,#f8e8a8,#d8b850);border-radius:1px"></div>
<div style="left:88px;top:878px;width:16px;height:13px;border:1px solid #c0c8d0;background:linear-gradient(#2a5ab0,#5a8ad8)"></div>
<svg style="position:absolute;left:110px;top:875px" width="20" height="20">
<text x="1" y="16.5" font-family="Liberation Sans" font-weight="bold" font-size="21" fill="#2a9ae8">e</text><path d="M1.5 17Q-0.5 11 6 6Q13 1 18 2.5Q17 0 9 3Q-1 9 1.5 17Z" fill="#f0c020"/></svg>
<div style="left:146px;top:874px;font:bold 12px/14px 'Liberation Sans', sans-serif;color:#fff">»</div>
<div style="left:162px;top:872px;width:154px;height:23px;border:1px solid #1a1a1a;border-radius:3px;background:linear-gradient(#8a8c90 0,#5e6064 45%,#141518 50%,#0a0a0c 100%);box-shadow:inset 0 0 0 1px rgba(255,255,255,0.18)"></div>
<svg style="position:absolute;left:170px;top:875px" width="20" height="20">
<text x="1" y="16.5" font-family="Liberation Sans" font-weight="bold" font-size="21" fill="#2a9ae8">e</text><path d="M1.5 17Q-0.5 11 6 6Q13 1 18 2.5Q17 0 9 3Q-1 9 1.5 17Z" fill="#f0c020"/></svg>
<div style="left:190px;top:876px;font:11.8px/17px 'Liberation Sans', sans-serif;color:#fff">flatex - Windows Int...</div>
<div style="left:322px;top:872px;width:154px;height:23px;border:1px solid #1a1a1a;border-radius:3px;background:linear-gradient(#8a8c90 0,#5e6064 45%,#141518 50%,#0a0a0c 100%);box-shadow:inset 0 0 0 1px rgba(255,255,255,0.18)"></div>
<svg style="position:absolute;left:330px;top:875px" width="20" height="20">
<text x="1" y="16.5" font-family="Liberation Sans" font-weight="bold" font-size="21" fill="#2a9ae8">e</text><path d="M1.5 17Q-0.5 11 6 6Q13 1 18 2.5Q17 0 9 3Q-1 9 1.5 17Z" fill="#f0c020"/></svg>
<div style="left:350px;top:876px;font:11.8px/17px 'Liberation Sans', sans-serif;color:#fff">Thread für Papiertig...</div>
<div style="left:482px;top:872px;width:154px;height:23px;border:1px solid #1a1a1a;border-radius:3px;background:linear-gradient(#8a8c90 0,#5e6064 45%,#141518 50%,#0a0a0c 100%);box-shadow:inset 0 0 0 1px rgba(255,255,255,0.18)"></div>
<svg style="position:absolute;left:490px;top:879px" width="16" height="10" shape-rendering="crispEdges"><g fill="#b8bec6"><rect x="0" y="0" width="1" height="1"/><rect x="2" y="0" width="1" height="1"/><rect x="4" y="0" width="1" height="1"/><rect x="6" y="0" width="1" height="1"/><rect x="8" y="0" width="1" height="1"/><rect x="10" y="0" width="1" height="1"/><rect x="12" y="0" width="1" height="1"/><rect x="14" y="0" width="1" height="1"/><rect x="0" y="2" width="1" height="1"/><rect x="2" y="2" width="1" height="1"/><rect x="4" y="2" width="1" height="1"/><rect x="6" y="2" width="1" height="1"/><rect x="8" y="2" width="1" height="1"/><rect x="10" y="2" width="1" height="1"/><rect x="12" y="2" width="1" height="1"/><rect x="14" y="2" width="1" height="1"/><rect x="0" y="4" width="1" height="1"/><rect x="2" y="4" width="1" height="1"/><rect x="4" y="4" width="1" height="1"/><rect x="8" y="4" width="1" height="1"/><rect x="10" y="4" width="1" height="1"/><rect x="12" y="4" width="1" height="1"/><rect x="0" y="6" width="1" height="1"/><rect x="2" y="6" width="1" height="1"/><rect x="10" y="6" width="1" height="1"/><rect x="0" y="8" width="1" height="1"/></g></svg>
<div style="left:510px;top:876px;font:11.8px/17px 'Liberation Sans', sans-serif;color:#fff">NetDania FinanceC...</div>
<div style="left:642px;top:872px;width:154px;height:23px;border:1px solid #1a1a1a;border-radius:3px;background:linear-gradient(#5a6470 0,#3a4450 45%,#0c1620 50%,#0a1a28 80%,#1a5a80 100%);box-shadow:inset 0 0 0 1px rgba(255,255,255,0.18)"></div>
<svg style="position:absolute;left:650px;top:879px" width="16" height="10" shape-rendering="crispEdges"><g fill="#b8bec6"><rect x="0" y="0" width="1" height="1"/><rect x="2" y="0" width="1" height="1"/><rect x="4" y="0" width="1" height="1"/><rect x="6" y="0" width="1" height="1"/><rect x="8" y="0" width="1" height="1"/><rect x="10" y="0" width="1" height="1"/><rect x="12" y="0" width="1" height="1"/><rect x="14" y="0" width="1" height="1"/><rect x="0" y="2" width="1" height="1"/><rect x="2" y="2" width="1" height="1"/><rect x="4" y="2" width="1" height="1"/><rect x="6" y="2" width="1" height="1"/><rect x="8" y="2" width="1" height="1"/><rect x="10" y="2" width="1" height="1"/><rect x="12" y="2" width="1" height="1"/><rect x="14" y="2" width="1" height="1"/><rect x="0" y="4" width="1" height="1"/><rect x="2" y="4" width="1" height="1"/><rect x="4" y="4" width="1" height="1"/><rect x="8" y="4" width="1" height="1"/><rect x="10" y="4" width="1" height="1"/><rect x="12" y="4" width="1" height="1"/><rect x="0" y="6" width="1" height="1"/><rect x="2" y="6" width="1" height="1"/><rect x="10" y="6" width="1" height="1"/><rect x="0" y="8" width="1" height="1"/></g></svg>
<div style="left:670px;top:876px;font:11.8px/17px 'Liberation Sans', sans-serif;color:#fff">NetDania FinanceC...</div>
<div style="left:802px;top:872px;width:154px;height:23px;border:1px solid #1a1a1a;border-radius:3px;background:linear-gradient(#8a8c90 0,#5e6064 45%,#141518 50%,#0a0a0c 100%);box-shadow:inset 0 0 0 1px rgba(255,255,255,0.18)"></div>
<svg style="position:absolute;left:810px;top:876px" width="16" height="18">
<path d="M3 3L7 14M13 3L9 14" stroke="#e8e8d0" stroke-width="2"/><path d="M5 2L8 8L11 2" fill="#e89820"/><rect x="6" y="12" width="4" height="5" fill="#b02020"/></svg>
<div style="left:830px;top:876px;font:11.8px/17px 'Liberation Sans', sans-serif;color:#fff">Unbenannt - Paint</div>
<svg style="position:absolute;left:1290px;top:872px" width="150" height="26">
<path d="M14 8L9.5 12.5L14 17" stroke="#e8e8e8" stroke-width="2.2" fill="none"/>
<rect x="24" y="5" width="15" height="10" rx="3" fill="#e8ecf0"/><rect x="24" y="10" width="15" height="3" fill="#b8c0cc"/><rect x="26" y="15" width="11" height="3" fill="#5a6a8a" opacity="0.6"/>
<path d="M53 4V8M56 4V8" stroke="#e0c060" stroke-width="1.2"/><rect x="51.5" y="8" width="6" height="5" rx="1" fill="#f4f4f4"/><rect x="54" y="13" width="1.6" height="6" fill="#f0f0f0"/>
<rect x="58" y="4.5" width="7.5" height="13" fill="#a8e0a8" stroke="#f4f4f4" stroke-width="1.2"/>
<rect x="75" y="3.5" width="9" height="8" fill="#1a58b0" stroke="#e8f0ff" stroke-width="1"/>
<rect x="70.5" y="7.5" width="9" height="8" fill="#1a58b0" stroke="#e8f0ff" stroke-width="1"/><path d="M73 17H78" stroke="#e8f0ff" stroke-width="1.4"/>
<circle cx="80.5" cy="14.5" r="3.6" fill="#30a848"/><circle cx="79.5" cy="13.5" r="1.6" fill="#2a70d8"/>
<path d="M88 9H91L95 5V19L91 15H88Z" fill="#ececec"/><path d="M98 9.5Q100 12 98 14.5M100.5 7.5Q103.5 12 100.5 16.5" stroke="#70c070" stroke-width="1.1" fill="none"/>
</svg>
<div style="left:1399px;top:877px;font:11.5px/17px 'Liberation Sans', sans-serif;color:#fff">09:38</div>
<div class="xl" style="left:45px;top:809px">08</div><div class="xl" style="left:86px;top:809px">15</div><div class="xl" style="left:126px;top:809px">22</div><div class="xl" style="left:166px;top:809px">29</div><div class="xl" style="left:207px;top:809px">05</div><div class="xl" style="left:247px;top:809px">12</div><div class="xl" style="left:287px;top:809px">19</div><div class="xl" style="left:327px;top:809px">26</div><div class="xl" style="left:368px;top:809px">03</div><div class="xl" style="left:408px;top:809px">10</div><div class="xl" style="left:448px;top:809px">17</div><div class="xl" style="left:489px;top:809px">24</div><div class="xl" style="left:529px;top:809px">31</div><div class="xl" style="left:569px;top:809px">07</div><div class="xl" style="left:610px;top:809px">14</div><div class="xl" style="left:650px;top:809px">21</div><div class="xl" style="left:690px;top:809px">28</div><div class="xl" style="left:730px;top:809px">05</div><div class="xl" style="left:771px;top:809px">12</div><div class="xl" style="left:811px;top:809px">19</div><div class="xl" style="left:851px;top:809px">26</div><div class="xl" style="left:892px;top:809px">02</div><div class="xl" style="left:932px;top:809px">09</div><div class="xl" style="left:972px;top:809px">16</div><div class="xl" style="left:1013px;top:809px">23</div><div class="xl" style="left:1053px;top:809px">30</div><div class="xl" style="left:1093px;top:809px">06</div><div class="xl" style="left:1133px;top:809px">13</div><div class="xl" style="left:1174px;top:809px">20</div><div class="xl" style="left:1214px;top:809px">27</div><div class="xl" style="left:1254px;top:809px">05</div><div class="xl" style="left:1295px;top:809px">12</div><div class="xl" style="left:1335px;top:809px">19</div><div class="xl" style="left:25px;width:81px;top:824px">Aug/08/11</div><div class="xl" style="left:187px;width:81px;top:824px">Sep/05</div><div class="xl" style="left:348px;width:81px;top:824px">Okt/03</div><div class="xl" style="left:549px;width:81px;top:824px">Nov/07</div><div class="xl" style="left:710px;width:81px;top:824px">Dez/05</div><div class="xl" style="left:872px;width:81px;top:824px">Jan/02/12</div><div class="xl" style="left:1073px;width:81px;top:824px">Feb/06</div><div class="xl" style="left:1234px;width:81px;top:824px">Mrz/05</div><div class="yl" style="top:90px">1.960,000</div><div class="yl" style="top:119px">1.940,000</div><div class="yl" style="top:149px">1.920,000</div><div class="yl" style="top:179px">1.900,000</div><div class="yl" style="top:209px">1.880,000</div><div class="yl" style="top:238px">1.860,000</div><div class="yl" style="top:268px">1.840,000</div><div class="yl" style="top:298px">1.820,000</div><div class="yl" style="top:328px">1.800,000</div><div class="yl" style="top:357px">1.780,000</div><div class="yl" style="top:387px">1.760,000</div><div class="yl" style="top:417px">1.740,000</div><div class="yl" style="top:447px">1.720,000</div><div class="yl" style="top:476px">1.700,000</div><div class="yl" style="top:506px">1.680,000</div><div class="yl" style="top:536px">1.660,000</div><div class="yl" style="top:566px">1.640,000</div><div class="yl" style="top:595px">1.620,000</div><div class="yl" style="top:625px">1.600,000</div><div class="yl" style="top:655px">1.580,000</div><div class="yl" style="top:685px">1.560,000</div><div class="yl" style="top:714px">1.540,000</div><div class="yl" style="top:744px">1.520,000</div><div class="yl" style="top:774px">1.500,000</div>
<div style="left:1380px;top:360px;width:52px;height:11px;border:1px solid #d83030;background:#fff"></div>
<div style="left:1383px;top:360px;font:10.7px/14px 'Liberation Sans', sans-serif;color:#000080">1.777,506</div>

</body></html>
